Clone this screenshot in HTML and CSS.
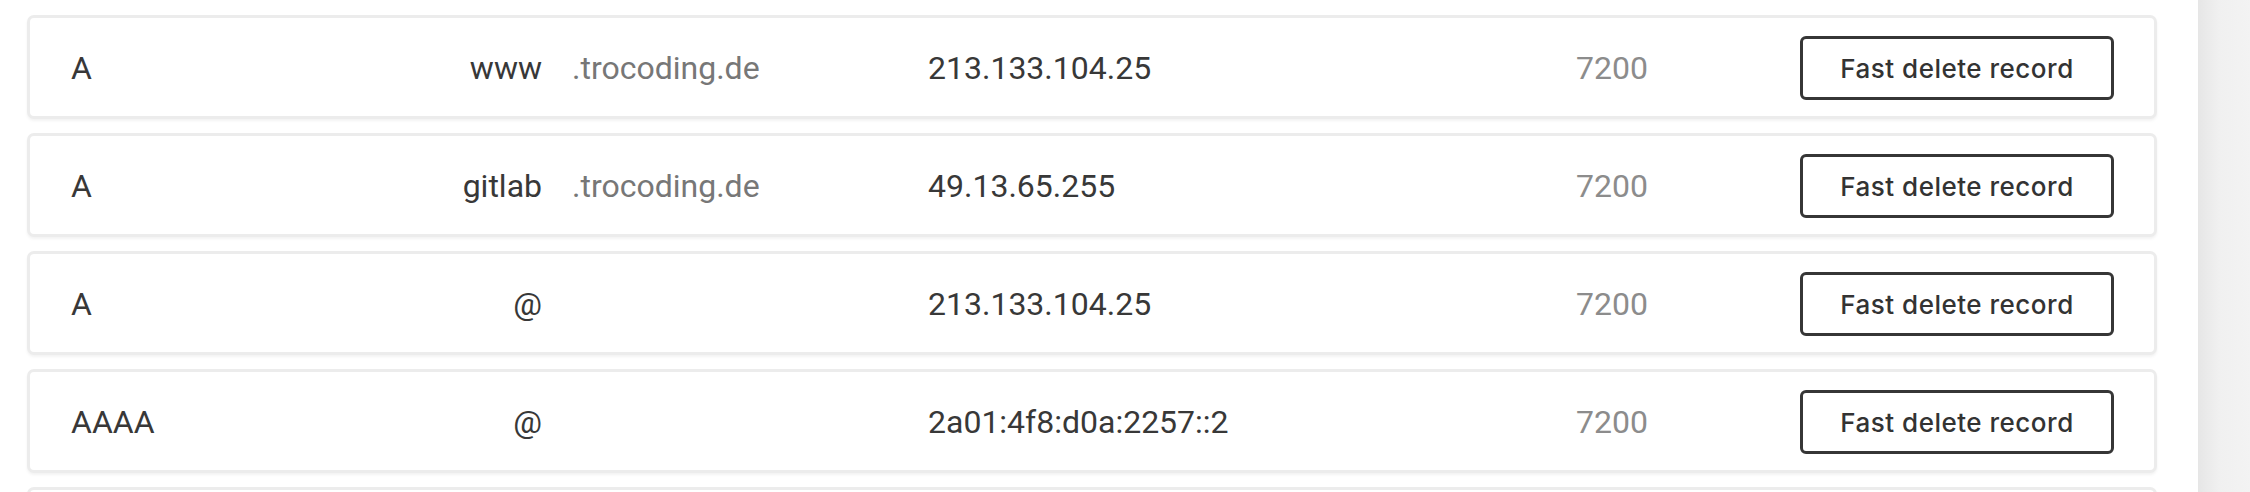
FILE: index.html
```html
<!DOCTYPE html>
<html lang="en">
<head>
<meta charset="utf-8">
<title>DNS records</title>
<link rel="stylesheet" href="styles.css">
</head>
<body>
<div class="page">
  <main class="records">
    <div class="record">
      <div class="type">A</div>
      <div class="name">www</div>
      <div class="domain">.trocoding.de</div>
      <div class="value">213.133.104.25</div>
      <div class="ttl">7200</div>
      <div class="action"><button class="btn">Fast delete record</button></div>
    </div>
    <div class="record">
      <div class="type">A</div>
      <div class="name">gitlab</div>
      <div class="domain">.trocoding.de</div>
      <div class="value">49.13.65.255</div>
      <div class="ttl">7200</div>
      <div class="action"><button class="btn">Fast delete record</button></div>
    </div>
    <div class="record">
      <div class="type">A</div>
      <div class="name">@</div>
      <div class="domain"></div>
      <div class="value">213.133.104.25</div>
      <div class="ttl">7200</div>
      <div class="action"><button class="btn">Fast delete record</button></div>
    </div>
    <div class="record">
      <div class="type">AAAA</div>
      <div class="name">@</div>
      <div class="domain"></div>
      <div class="value">2a01:4f8:d0a:2257::2</div>
      <div class="ttl">7200</div>
      <div class="action"><button class="btn">Fast delete record</button></div>
    </div>
    <div class="record record-partial"></div>
  </main>
  <aside class="scrollbar"></aside>
</div>
</body>
</html>
```
FILE: styles.css
```css
* { box-sizing: border-box; }
html, body {
  margin: 0;
  padding: 0;
  height: 492px;
  overflow: hidden;
  background: #ffffff;
}
body {
  font-family: Roboto, "Liberation Sans", sans-serif;
  color: #3a3a3a;
}
.page {
  display: flex;
  height: 492px;
}
.records {
  flex: 1;
  display: flex;
  flex-direction: column;
  gap: 14px;
  padding: 15px 41px 0 27px;
}
.record {
  flex: none;
  display: grid;
  grid-template-columns: 200px 271px 386px 600px 120px 1fr;
  align-items: center;
  height: 104px;
  padding: 18px 40px 16px 41px;
  background: #ffffff;
  border: 3px solid #ececec;
  border-radius: 7px;
  box-shadow: 0 2px 3px rgba(0, 0, 0, 0.05);
  font-size: 32px;
  line-height: 1;
}
.type { color: #383838; }
.name { text-align: right; color: #383838; }
.domain { padding-left: 30px; color: #777777; }
.value { color: #383838; }
.ttl { text-align: right; color: #8c8c8c; }
.action { display: flex; justify-content: flex-end; }
.btn {
  width: 314px;
  height: 64px;
  background: #ffffff;
  border: 3px solid #363636;
  border-radius: 6px;
  font-family: Inter, "Open Sans", sans-serif;
  font-weight: 500;
  font-size: 26px;
  letter-spacing: 0.5px;
  color: #333333;
  padding: 0;
  cursor: pointer;
}
.scrollbar {
  flex: none;
  width: 52px;
  height: 492px;
  background: linear-gradient(to right, #e6e6e6, #f0f0f0 40%, #f3f3f3);
}
```
